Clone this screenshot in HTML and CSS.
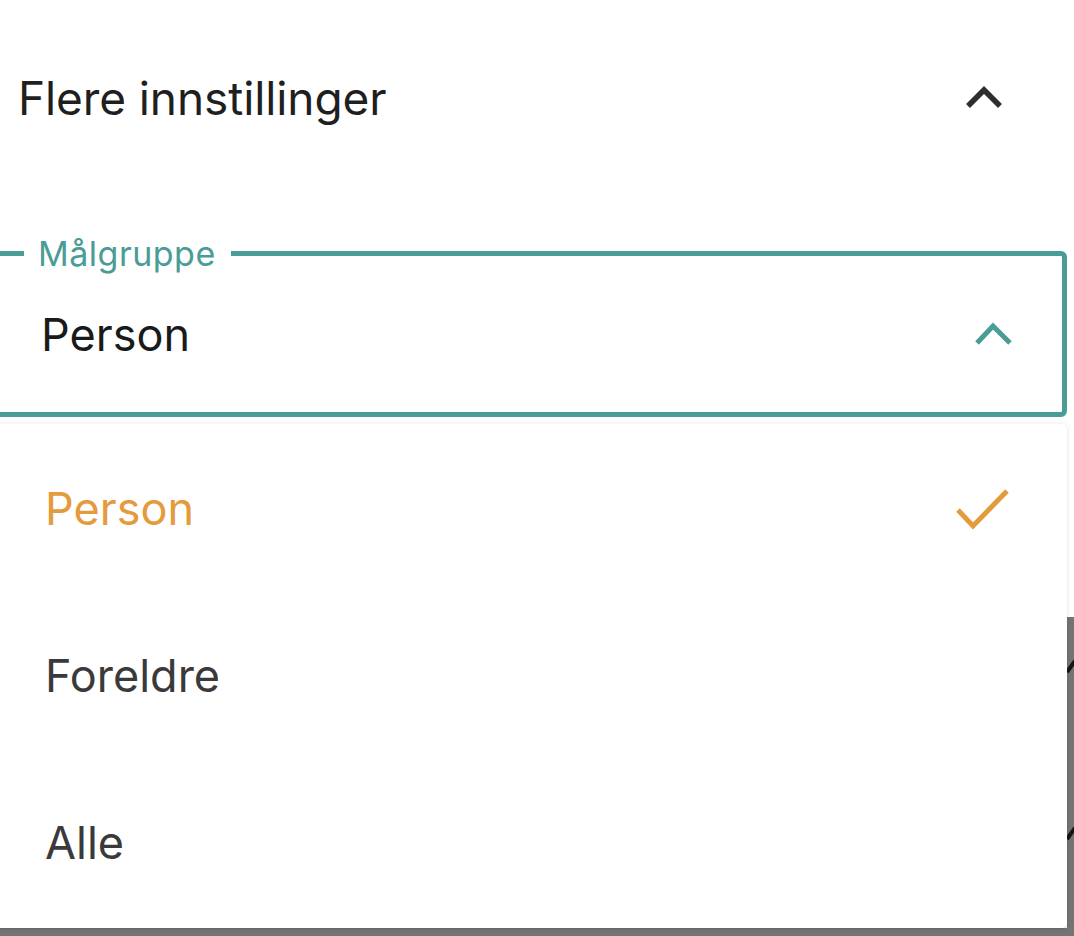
FILE: index.html
```html
<!DOCTYPE html>
<html lang="no">
<head>
    <meta charset="UTF-8">
    <meta name="viewport" content="width=device-width, initial-scale=1.0">
    <title>Flere innstillinger</title>
    <link rel="stylesheet" href="styles.css">
</head>
<body>

<div class="behind">
    <svg class="behind-mark mark-1" width="8" height="16" viewBox="0 0 8 16"><path d="M1 14 L9 3" /></svg>
    <svg class="behind-mark mark-2" width="8" height="16" viewBox="0 0 8 16"><path d="M1 14 L9 3" /></svg>
</div>

<div class="sheet">
    <div class="section-header">
        <h2>Flere innstillinger</h2>
        <svg class="chevron" width="40" height="26" viewBox="0 0 40 26">
            <polyline points="4,21 20,5 36,21" />
        </svg>
    </div>

    <div class="select-wrap">
        <fieldset class="field">
            <legend>Målgruppe</legend>
            <div class="field-row">
                <span class="field-value">Person</span>
                <svg class="chevron chevron-teal" width="40" height="28" viewBox="0 0 40 28">
                    <polyline points="4,23 20,6 37,23" />
                </svg>
            </div>
        </fieldset>

        <ul class="menu">
            <li class="menu-item selected">
                <span>Person</span>
                <svg class="check" width="54" height="42" viewBox="0 0 54 42">
                    <polyline points="2,22 17,38 51,3" />
                </svg>
            </li>
            <li class="menu-item"><span>Foreldre</span></li>
            <li class="menu-item"><span>Alle</span></li>
        </ul>
    </div>
</div>

</body>
</html>
```

FILE: styles.css
```css
body {
    font-family: 'Inter', 'Noto Sans', sans-serif;
    margin: 0;
    height: 936px;
    overflow: hidden;
    background: linear-gradient(to bottom, #ffffff 0, #ffffff 617px, #747474 617px);
    color: #1e1e1e;
    position: relative;
}

.behind-mark {
    position: absolute;
    right: 0;
}

.behind-mark path {
    fill: none;
    stroke: #151515;
    stroke-width: 4;
}

.mark-1 {
    top: 658px;
}

.mark-2 {
    top: 825px;
}

.sheet {
    position: relative;
}

.section-header {
    height: 196px;
    display: flex;
    align-items: center;
    justify-content: space-between;
    padding: 0 70px 0 18px;
    background: #fff;
}

.section-header h2 {
    margin: 0;
    font-size: 46px;
    font-weight: 400;
    line-height: 56px;
    letter-spacing: -0.1px;
    color: #1f1f1f;
}

.chevron polyline {
    fill: none;
    stroke: #2e2e2e;
    stroke-width: 5.5;
    stroke-linecap: butt;
    stroke-linejoin: miter;
}

.chevron-teal polyline {
    stroke: #4a9c96;
    stroke-width: 5;
}

.select-wrap {
    position: relative;
    background: #fff;
    margin-left: -10px;
    width: 1077px;
    padding-top: 38px;
}

.field {
    margin: 0;
    padding: 0 49px 0 46px;
    border: 5px solid #4a9c96;
    border-radius: 6px;
    min-width: 0;
}

.field legend {
    margin-left: -17px;
    padding: 2px 15px 0 14px;
    font-size: 34px;
    line-height: 36px;
    letter-spacing: 0.5px;
    color: #4a9c96;
}

.field-row {
    height: 124px;
    margin-bottom: 16px;
    display: flex;
    align-items: center;
    justify-content: space-between;
}

.field-value {
    font-size: 45px;
    color: #1a1a1a;
}

.menu {
    list-style: none;
    margin: 7px 0 0 0;
    padding: 1px 0 2px;
    background: #fff;
    border-radius: 5px;
    box-shadow: 0 1px 2px rgba(0, 0, 0, 0.12), 0 0 6px rgba(0, 0, 0, 0.08);
}

.menu-item {
    height: 167px;
    display: flex;
    align-items: center;
    justify-content: space-between;
    padding: 0 57px 0 55px;
    font-size: 45px;
    color: #3a3a3a;
}

.menu-item.selected {
    color: #e49b3b;
}

.check polyline {
    fill: none;
    stroke: #e49b3b;
    stroke-width: 5;
}
```
